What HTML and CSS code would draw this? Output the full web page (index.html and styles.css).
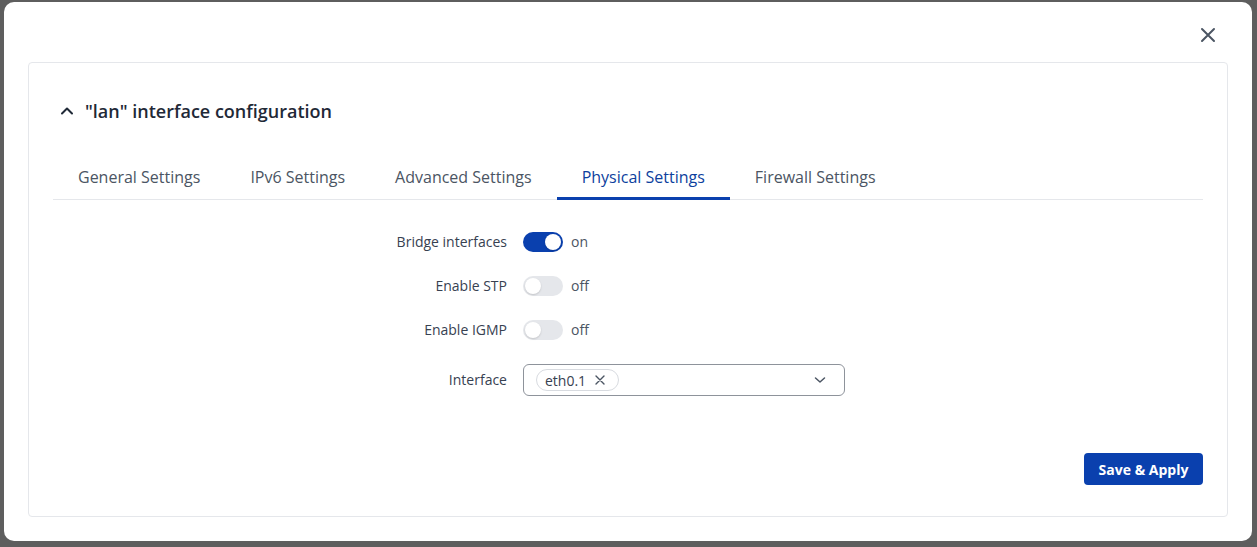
FILE: index.html
```html
<!DOCTYPE html>
<html lang="en">

<head>
  <meta charset="UTF-8" />
  <meta name="viewport" content="width=device-width, initial-scale=1.0" />
  <title>lan interface configuration</title>
  <link rel="stylesheet" href="styles.css">
</head>

<body>
  <div class="modal">
    <div class="modal-head">
      <button class="close" type="button" aria-label="Close">
        <svg width="16" height="16" viewBox="0 0 16 16">
          <path d="M2 2L14 14M14 2L2 14" stroke="#4b5563" stroke-width="2" stroke-linecap="round" fill="none" />
        </svg>
      </button>
    </div>

    <div class="card">
      <h3 class="card-title">
        <svg class="chevron" width="14" height="14" viewBox="0 0 14 14">
          <path d="M2 9.5L7 4.5L12 9.5" stroke="#1f2937" stroke-width="2" stroke-linecap="round" stroke-linejoin="round" fill="none" />
        </svg>
        "lan" interface configuration
      </h3>

      <ul class="tabs">
        <li><a href="javascript:;">General Settings</a></li>
        <li><a href="javascript:;">IPv6 Settings</a></li>
        <li><a href="javascript:;">Advanced Settings</a></li>
        <li><a class="active" href="javascript:;">Physical Settings</a></li>
        <li><a href="javascript:;">Firewall Settings</a></li>
      </ul>

      <div class="form">
        <label class="label">Bridge interfaces</label>
        <div class="control">
          <span class="switch on"><span class="knob"></span></span>
          <span class="state">on</span>
        </div>

        <label class="label">Enable STP</label>
        <div class="control">
          <span class="switch"><span class="knob"></span></span>
          <span class="state">off</span>
        </div>

        <label class="label">Enable IGMP</label>
        <div class="control">
          <span class="switch"><span class="knob"></span></span>
          <span class="state">off</span>
        </div>

        <label class="label">Interface</label>
        <div class="control">
          <div class="select">
            <span class="chip">
              eth0.1
              <svg width="10" height="10" viewBox="0 0 10 10">
                <path d="M1 1L9 9M9 1L1 9" stroke="#4b5563" stroke-width="1.4" stroke-linecap="round" fill="none" />
              </svg>
            </span>
            <svg class="caret" width="12" height="8" viewBox="0 0 12 8">
              <path d="M1.5 2L6 6L10.5 2" stroke="#4b5563" stroke-width="1.5" stroke-linecap="round" stroke-linejoin="round" fill="none" />
            </svg>
          </div>
        </div>
      </div>

      <div class="actions">
        <button class="btn-primary" type="button">Save &amp; Apply</button>
      </div>
    </div>
  </div>
</body>

</html>
```

FILE: styles.css
```css
* {
  margin: 0;
  padding: 0;
  box-sizing: border-box;
}

body {
  background: #5e5e5e;
  font-family: "Open Sans", "Noto Sans", sans-serif;
  color: #374151;
  height: 547px;
  overflow: hidden;
}

.modal {
  margin: 2px 5px 0 4px;
  height: 539px;
  background: #fff;
  border-radius: 10px;
  padding: 0 24px 24px;
  display: flex;
  flex-direction: column;
}

.modal-head {
  height: 60px;
  display: flex;
  justify-content: flex-end;
  align-items: flex-start;
  padding-top: 24px;
  padding-right: 11px;
}

.close {
  border: none;
  background: none;
  width: 18px;
  height: 18px;
  display: flex;
  align-items: center;
  justify-content: center;
  cursor: pointer;
}

.card {
  flex: 1;
  border: 1px solid #e5e7eb;
  border-radius: 4px;
  padding: 35px 24px 31px;
  display: flex;
  flex-direction: column;
}

.card-title {
  display: flex;
  align-items: center;
  font-size: 18px;
  font-weight: 600;
  line-height: 26px;
  color: #1f2937;
}

.chevron {
  margin-left: 7px;
  margin-right: 11px;
}

.tabs {
  list-style: none;
  display: flex;
  margin-top: 29px;
  border-bottom: 1px solid #e5e7eb;
}

.tabs a {
  display: block;
  padding: 12px 25px 8px;
  font-size: 16px;
  line-height: 24px;
  color: #4b5563;
  text-decoration: none;
  border-bottom: 3px solid transparent;
  margin-bottom: -1px;
}

.tabs a.active {
  color: #0d3f9e;
  border-color: #0a40ae;
}

.form {
  display: grid;
  grid-template-columns: 454px 1fr;
  column-gap: 16px;
  row-gap: 24px;
  padding-top: 32px;
  font-size: 14px;
}

.label {
  text-align: right;
  align-self: center;
  color: #374151;
  line-height: 20px;
}

.control {
  display: flex;
  align-items: center;
  gap: 8px;
}

.switch {
  width: 40px;
  height: 20px;
  border-radius: 10px;
  background: #e5e7eb;
  padding: 2px;
  display: flex;
}

.switch .knob {
  width: 16px;
  height: 16px;
  border-radius: 50%;
  background: #fff;
  box-shadow: 0 1px 2px rgba(0, 0, 0, 0.15);
}

.switch.on {
  background: #0a40ae;
  justify-content: flex-end;
}

.state {
  color: #4b5563;
  line-height: 20px;
}

.select {
  width: 322px;
  height: 32px;
  border: 1px solid #8e939b;
  border-radius: 6px;
  display: flex;
  align-items: center;
  justify-content: space-between;
  padding: 0 18px 0 12px;
}

.chip {
  display: flex;
  align-items: center;
  gap: 9px;
  height: 22px;
  padding: 0 13px 0 8px;
  border: 1px solid #d8dbe0;
  border-radius: 11px;
  color: #374151;
}

.actions {
  margin-top: auto;
  display: flex;
  justify-content: flex-end;
}

.btn-primary {
  width: 119px;
  height: 32px;
  border: none;
  border-radius: 4px;
  background: #0a40ae;
  color: #fff;
  font-family: "Open Sans", "Noto Sans", sans-serif;
  font-size: 14px;
  font-weight: 700;
  cursor: pointer;
}
```
